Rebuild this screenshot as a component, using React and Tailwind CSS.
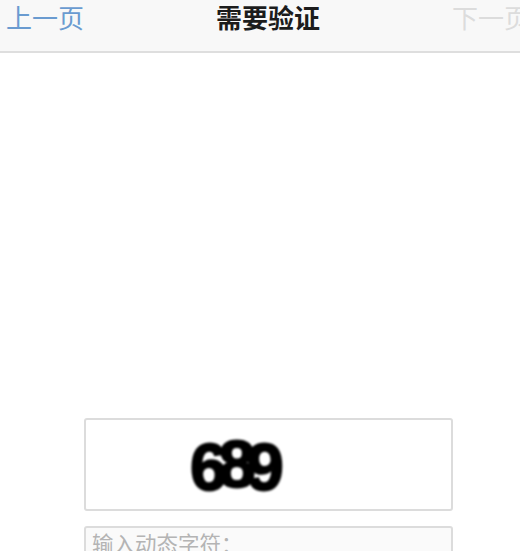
import React from 'react';

const cjk = "font-['Noto_Sans_CJK_SC','Noto_Sans',sans-serif]";

const App = () => {
  return (
    <div className={`h-[551px] w-[520px] overflow-hidden bg-white ${cjk}`}>
      {/* Nav bar */}
      <header className="flex h-[53px] items-center justify-between border-b-2 border-[#dedede] bg-[#f8f8f8] pb-[17px] pl-[6px]">
        <a className="w-[78px] text-[26px] leading-[34px] text-[#6a9bd0]">上一页</a>
        <h1 className="ml-[132px] w-[104px] text-[26px] leading-[34px] font-semibold whitespace-nowrap text-[#1c1c1c]">需要验证</h1>
        <a className="ml-auto h-[34px] w-[68px] overflow-hidden text-[26px] leading-[34px] whitespace-nowrap text-[#dcdcdc]">下一页</a>
      </header>

      {/* Verification form */}
      <main className="ml-[84px] w-[369px] pt-[365px]">
        <div className="flex h-[93px] items-center rounded-[3px] border-2 border-[#dcdcdc] bg-white pt-[3px] pl-[104px]">
          <span className="flex font-['Liberation_Sans',sans-serif] text-[67px] leading-none font-bold text-black blur-[0.8px] [-webkit-text-stroke:2px_black]">
            <span>6</span>
            <span className="-ml-[9px] -mt-[3px]">8</span>
            <span className="-ml-[9px]">9</span>
          </span>
        </div>
        <div className="mt-[15px] h-[60px] rounded-[3px] border-2 border-[#dcdcdc] bg-[#fafafa] pt-[1px] pl-[6px] text-[21.5px] leading-[28px] text-[#b4b4b4]">
          输入动态字符：
        </div>
      </main>
    </div>
  );
};

export default App;
